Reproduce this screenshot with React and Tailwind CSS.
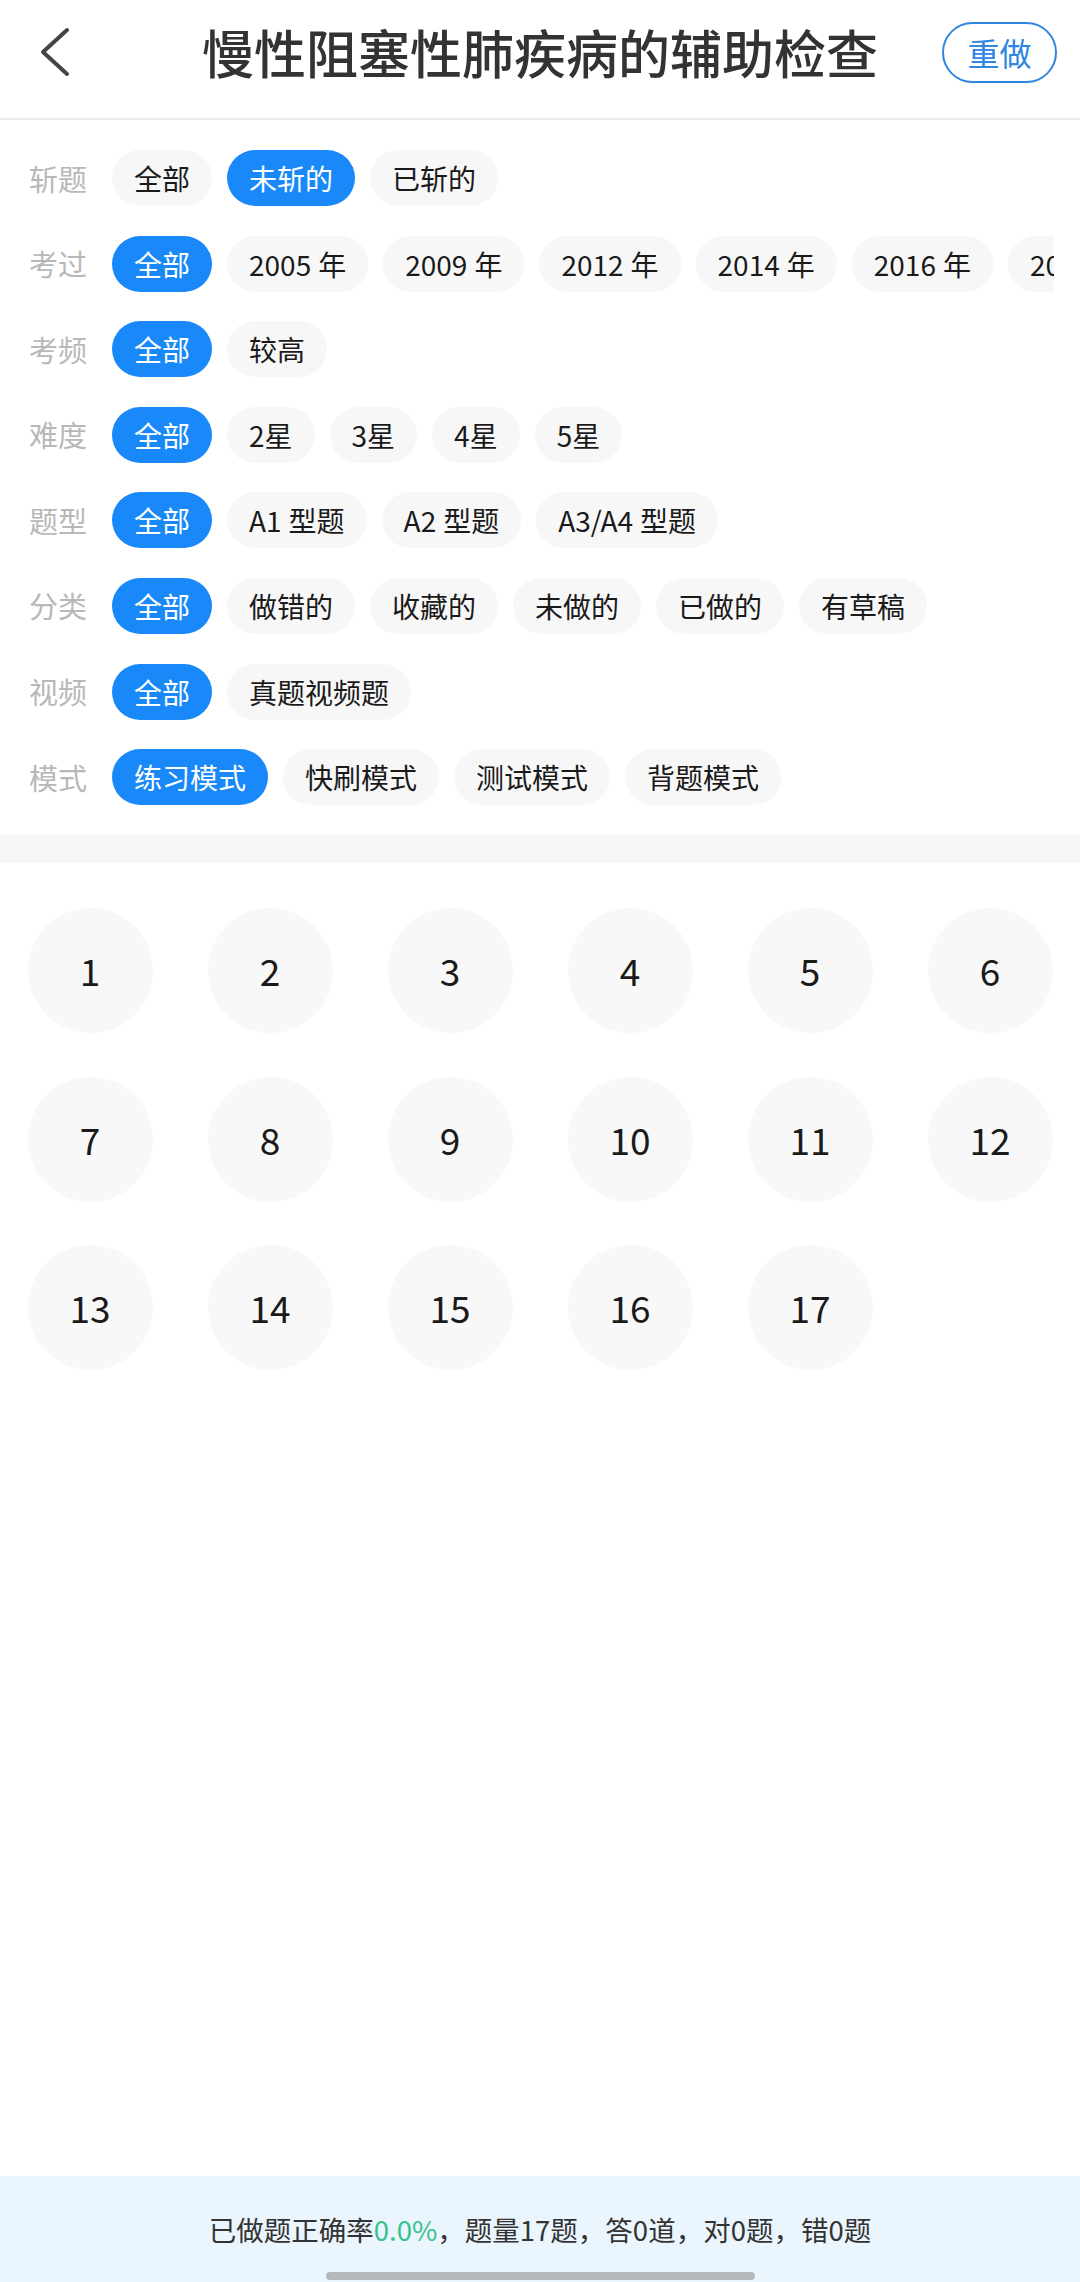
import React from "react";

const rows = [
  { label: "斩题", items: ["全部", "未斩的", "已斩的"], active: 1 },
  { label: "考过", items: ["全部", "2005|年", "2009|年", "2012|年", "2014|年", "2016|年", "2018|年", "2020|年"], active: 0 },
  { label: "考频", items: ["全部", "较高"], active: 0 },
  { label: "难度", items: ["全部", "2星", "3星", "4星", "5星"], active: 0 },
  { label: "题型", items: ["全部", "A1|型题", "A2|型题", "A3/A4|型题"], active: 0 },
  { label: "分类", items: ["全部", "做错的", "收藏的", "未做的", "已做的", "有草稿"], active: 0 },
  { label: "视频", items: ["全部", "真题视频题"], active: 0 },
  { label: "模式", items: ["练习模式", "快刷模式", "测试模式", "背题模式"], active: 0 },
];

function Chip({ text, active }) {
  const parts = text.split("|");
  return (
    <div
      className={
        active
          ? "shrink-0 h-[56px] px-[22px] rounded-full flex items-center bg-[#1989fa] text-white text-[28px] leading-none whitespace-nowrap"
          : "shrink-0 h-[56px] px-[22px] rounded-full flex items-center bg-[#f7f7f7] text-[#1a1a1a] text-[28px] leading-none whitespace-nowrap"
      }
    >
      {parts[0]}
      {parts[1] ? <span className="ml-[7px]">{parts[1]}</span> : null}
    </div>
  );
}

export default function App() {
  const nums = Array.from({ length: 17 }, (_, i) => i + 1);
  return (
    <div className="min-h-[2282px] w-[1080px] flex flex-col bg-white font-['Noto_Sans_CJK_SC',sans-serif]">
      {/* Header */}
      <div className="h-[120px] border-b-2 border-[#ececec] grid grid-cols-[1fr_auto_1fr] items-center pb-[14px]">
        <div className="flex items-center pl-[40px]">
          <svg width="30" height="50" viewBox="0 0 30 50" fill="none">
            <polyline
              points="27,3 3,25 27,47"
              stroke="#444"
              strokeWidth="4"
              strokeLinecap="round"
              strokeLinejoin="round"
            />
          </svg>
        </div>
        <div className="text-[52px] leading-none font-medium text-[#333] whitespace-nowrap">
          慢性阻塞性肺疾病的辅助检查
        </div>
        <div className="flex justify-end pr-[23px]">
          <div className="h-[61px] w-[115px] rounded-full border-2 border-[#2f87e0] text-[#2f87e0] text-[32px] leading-none flex items-center justify-center">
            重做
          </div>
        </div>
      </div>

      {/* Filters */}
      <div className="pt-[30px] pb-[29px] flex flex-col gap-[29.6px]">
        {rows.map((r) => (
          <div key={r.label} className="flex items-center pl-[29px] pr-[26px]">
            <div className="w-[58px] mr-[25px] shrink-0 text-[29px] leading-none text-[#b8b8b8] whitespace-nowrap">
              {r.label}
            </div>
            <div className="flex gap-[15px] overflow-hidden min-w-0">
              {r.items.map((t, i) => (
                <Chip key={t} text={t} active={i === r.active} />
              ))}
            </div>
          </div>
        ))}
      </div>

      {/* Divider band */}
      <div className="h-[29px] bg-[#f7f7f7]" />

      {/* Number grid */}
      <div className="pt-[45px] grid grid-cols-6 gap-y-[43.5px]">
        {nums.map((n) => (
          <div key={n} className="flex justify-center">
            <div className="w-[125px] h-[125px] rounded-full bg-[#f8f8f8] flex items-center justify-center text-[37px] leading-none text-[#1a1a1a]">
              {n}
            </div>
          </div>
        ))}
      </div>

      <div className="flex-1" />

      {/* Footer */}
      <div className="h-[106px] bg-[#ebf5fe] flex flex-col items-center pt-[36px]">
        <div className="h-[36px] flex items-center text-[27.5px] leading-none text-[#333] whitespace-nowrap">
          已做题正确率<span className="text-[#36c28d]">0.0%</span>，题量17题，答0道，对0题，错0题
        </div>
        <div className="mt-[24px] h-[8px] w-[429px] rounded-full bg-[#b5b8bd]" />
      </div>
    </div>
  );
}
